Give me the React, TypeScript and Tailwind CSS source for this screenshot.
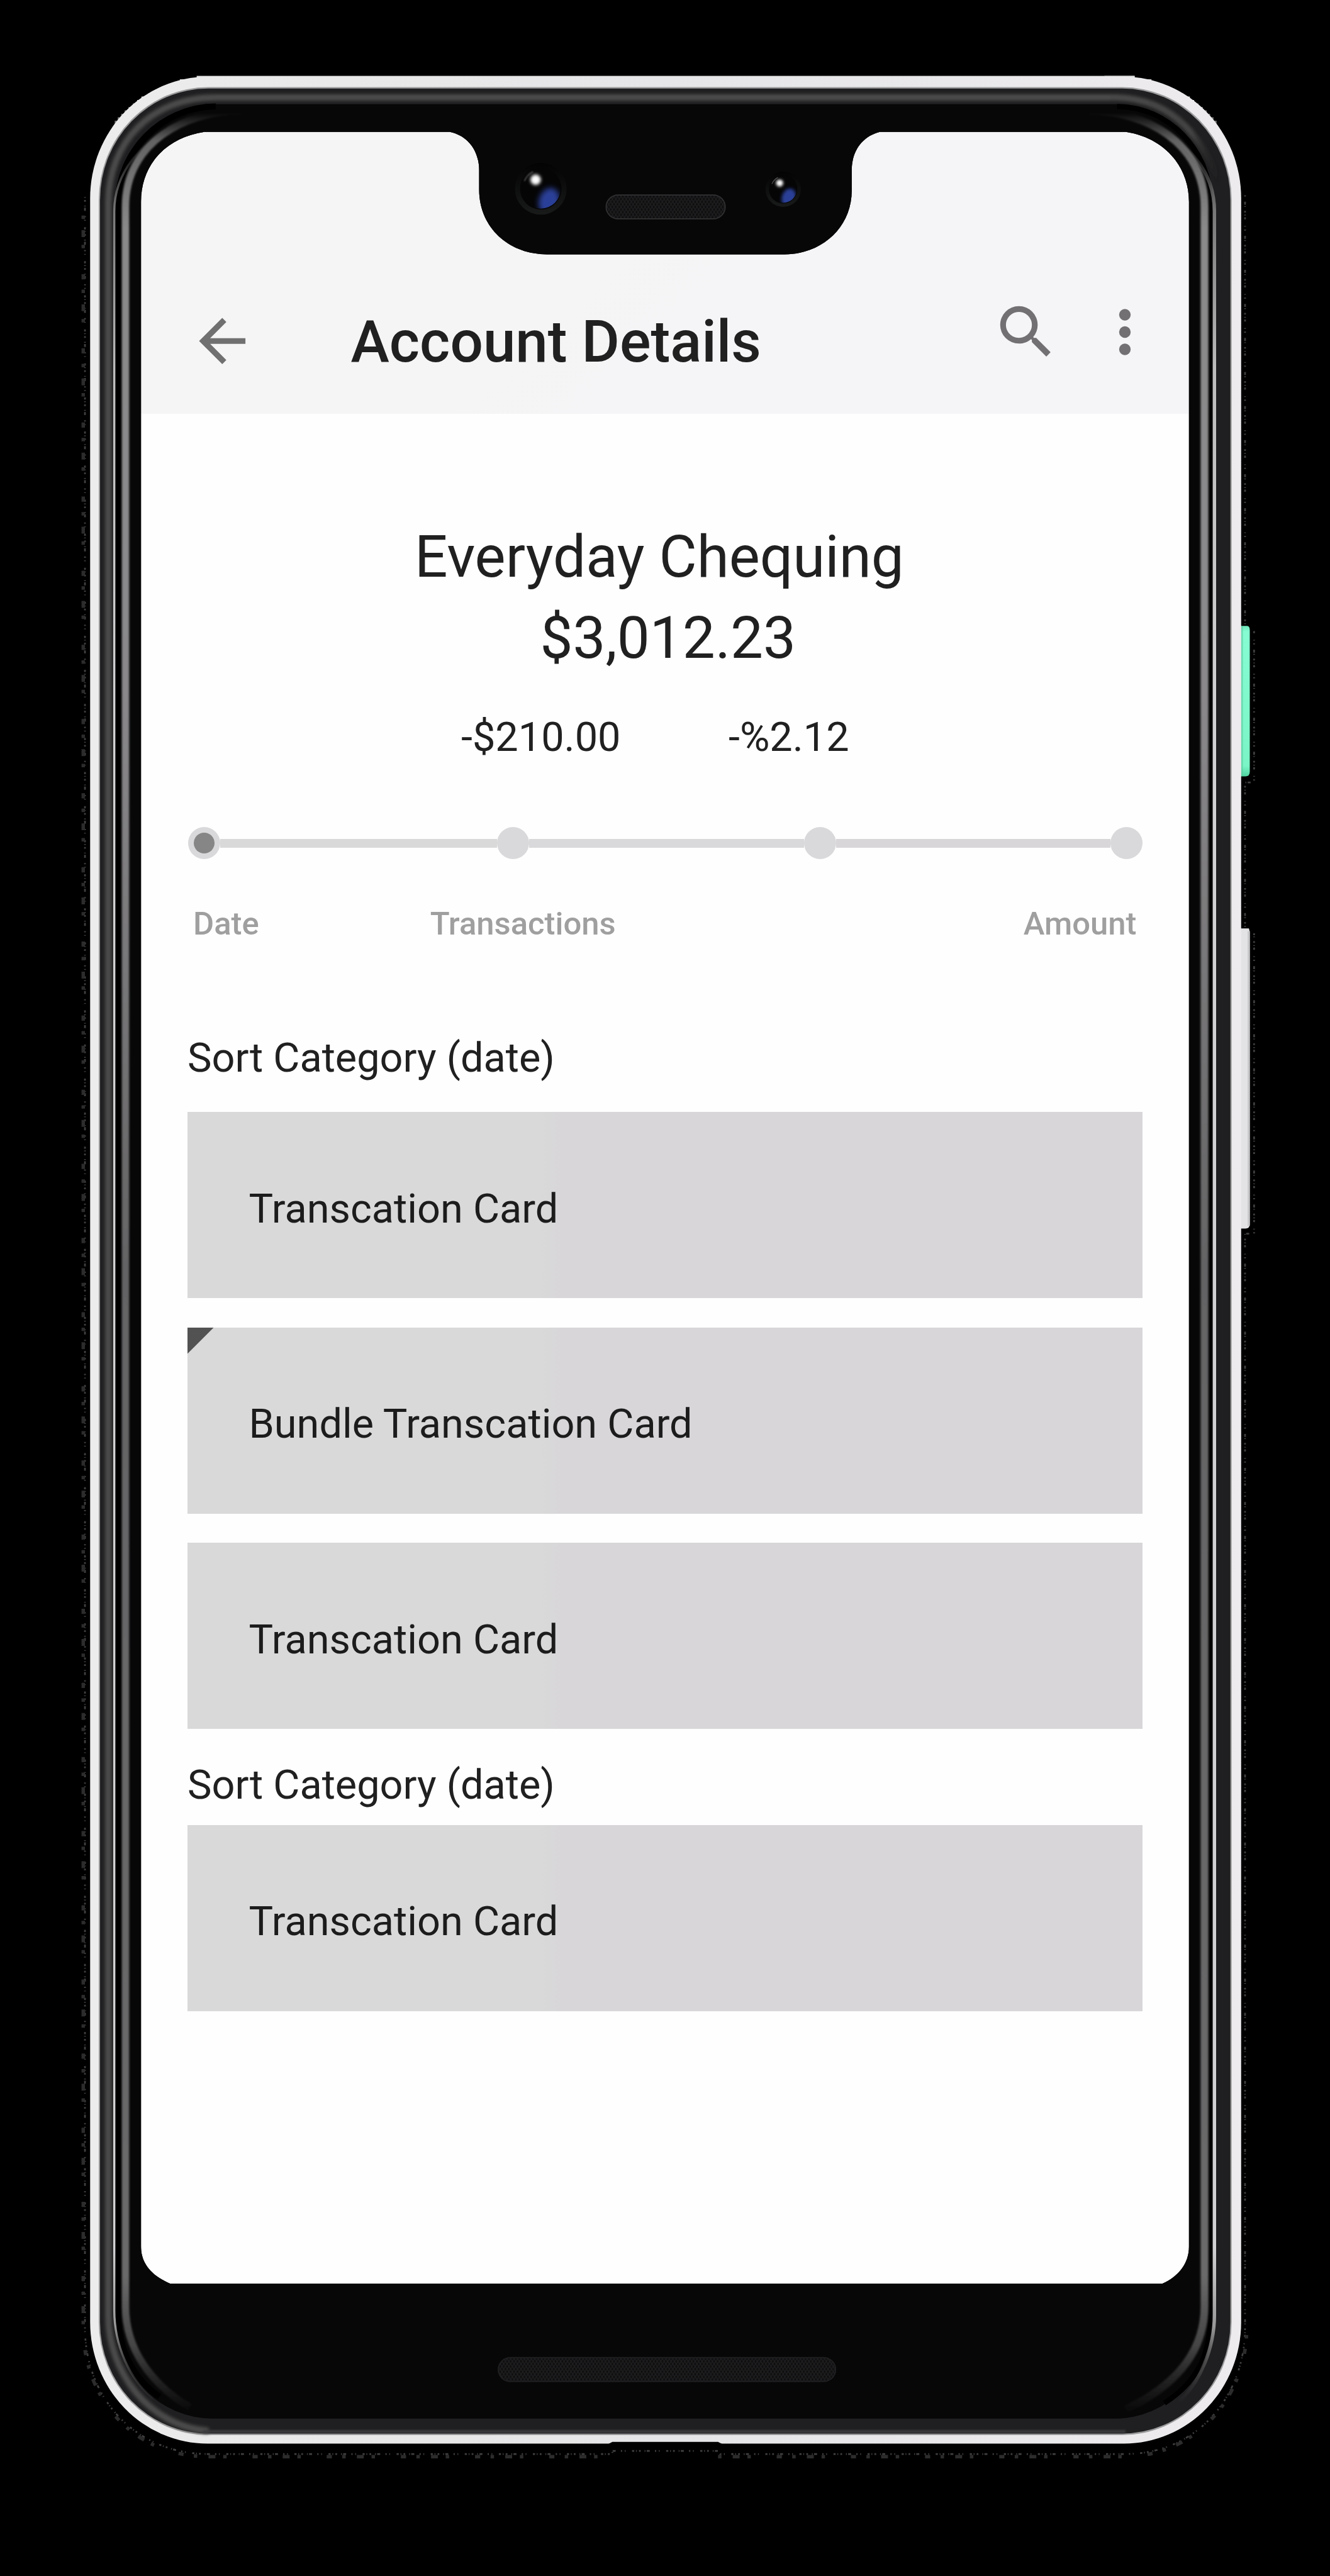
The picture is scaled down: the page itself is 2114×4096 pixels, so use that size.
import React from "react";

const SCREEN =
  "M327 468 C327 382 385 319 474 306 H1043 C1083 314 1111 348 1111 395 V440 C1111 528 1180 590 1268 590 H1819 C1905 590 1975 528 1975 442 V395 C1975 350 2000 316 2040 306 H2611 C2700 320 2757 386 2757 468 V5212 C2757 5250 2734 5281 2695 5298 H395 C350 5279 327 5250 327 5212 Z";

// Stepped fringe on the top corners, one entry for each 8px row.
const STEPS = [456, 417, 400, 376, 360, 344, 328, 318, 308, 298, 289, 281, 273, 266];

function Speaker({ x, y, w, h, edge }: { x: number; y: number; w: number; h: number; edge: string }) {
  return (
    <g>
      <rect x={x} y={y} width={w} height={h} rx={h / 2} fill="#0e0e0f" />
      <rect x={x} y={y} width={w} height={h} rx={h / 2} fill="url(#mesh)" />
      <rect x={x + 1.5} y={y + 1.5} width={w - 3} height={h - 3} rx={h / 2 - 1} fill="none" stroke={edge} strokeWidth="2.5" />
    </g>
  );
}

function Camera({ cx, cy, r }: { cx: number; cy: number; r: number }) {
  return (
    <g transform={`translate(${cx} ${cy}) scale(${r / 60})`}>
      <circle r="60" fill="url(#ring)" />
      <circle r="48" fill="#050506" />
      <g clipPath="url(#lens)">
        <ellipse cx="26" cy="24" rx="24" ry="32" fill="#2c3f98" filter="url(#soft7)" transform="rotate(14)" />
      </g>
      <path d="M-38 -18 A42 42 0 0 1 -18 -40" fill="none" stroke="#4a4a4a" strokeWidth="3" filter="url(#soft2)" />
      <circle cx="-12" cy="-21" r="12" fill="#fff" filter="url(#soft3)" />
    </g>
  );
}

function DeviceFrame() {
  return (
    <svg viewBox="0 0 3084 5976" className="pointer-events-none absolute inset-0 h-[4096px] w-[2114px]" preserveAspectRatio="none" aria-hidden="true">
      <defs>
        <clipPath id="outside">
          <path clipRule="evenodd" d={`M0 0 H3084 V5976 H0 Z ${SCREEN}`} />
        </clipPath>
        <clipPath id="lens"><circle r="46" /></clipPath>
        <filter id="soft2" x="-50%" y="-50%" width="200%" height="200%"><feGaussianBlur stdDeviation="1.5" /></filter>
        <filter id="soft3" x="-100%" y="-100%" width="300%" height="300%"><feGaussianBlur stdDeviation="4" /></filter>
        <filter id="soft7" x="-50%" y="-50%" width="200%" height="200%"><feGaussianBlur stdDeviation="6" /></filter>
        <filter id="blur" filterUnits="userSpaceOnUse" x="0" y="0" width="3084" height="5976"><feGaussianBlur stdDeviation="4" /></filter>
        <filter id="blur2" filterUnits="userSpaceOnUse" x="0" y="0" width="3084" height="5976"><feGaussianBlur stdDeviation="2.5" /></filter>
        <pattern id="mesh" width="8" height="12" patternUnits="userSpaceOnUse">
          <path d="M0 0 L4 6 L0 12 M8 0 L4 6 L8 12" fill="none" stroke="#1f1f21" strokeWidth="2" />
        </pattern>
        <linearGradient id="ring" x1="0" y1="0" x2="0" y2="1">
          <stop offset="0" stopColor="#030303" /><stop offset="1" stopColor="#191a1a" />
        </linearGradient>
        <linearGradient id="shell" gradientUnits="userSpaceOnUse" x1="209" y1="0" x2="2878" y2="0">
          <stop offset="0" stopColor="#ececec" /><stop offset="0.5" stopColor="#e6e5e7" /><stop offset="1" stopColor="#edebee" />
        </linearGradient>
        <linearGradient id="glow" gradientUnits="userSpaceOnUse" x1="0" y1="262" x2="0" y2="5600">
          <stop offset="0" stopColor="#8a8a8a" stopOpacity="0" /><stop offset="0.012" stopColor="#8a8a8a" stopOpacity="0.7" />
          <stop offset="0.05" stopColor="#8a8a8a" /><stop offset="0.25" stopColor="#8a888b" />
          <stop offset="0.5" stopColor="#646465" /><stop offset="0.94" stopColor="#6a6a6b" />
          <stop offset="0.97" stopColor="#555" stopOpacity="0.8" /><stop offset="1" stopColor="#444" stopOpacity="0" />
        </linearGradient>
        <linearGradient id="line" gradientUnits="userSpaceOnUse" x1="0" y1="330" x2="0" y2="5580">
          <stop offset="0" stopColor="#777" stopOpacity="0" /><stop offset="0.03" stopColor="#777" />
          <stop offset="0.1" stopColor="#bdbdbd" /><stop offset="0.25" stopColor="#d2d1d3" />
          <stop offset="0.93" stopColor="#d2d1d3" /><stop offset="0.965" stopColor="#999" /><stop offset="1" stopColor="#444" stopOpacity="0" />
        </linearGradient>
        <linearGradient id="band" gradientUnits="userSpaceOnUse" x1="2560" y1="0" x2="2830" y2="0">
          <stop offset="0" stopColor="#4b4b4b" /><stop offset="0.75" stopColor="#444" /><stop offset="1" stopColor="#222" stopOpacity="0" />
        </linearGradient>
        <linearGradient id="green" x1="0" y1="0" x2="0" y2="1">
          <stop offset="0" stopColor="#6fe8bb" /><stop offset="0.04" stopColor="#86fcd3" /><stop offset="0.93" stopColor="#7af5c6" /><stop offset="1" stopColor="#4fd39f" />
        </linearGradient>
      </defs>

      <path d="M197 457 V5400 C197 5560 310 5690 478 5693 H1420 V5686 H1670 V5693 H2610 C2775 5693 2887 5560 2887 5400 V2862 H2908 V2165 M2887 2150 V1815 H2908 V1460 M2887 1448 V450" fill="none" stroke="#404040" strokeWidth="4" strokeDasharray="2 5 4 9 2 3 7 12 3 6 2 15 5 4" />
      <path d="M193 500 V5400 C193 5560 305 5697 478 5699 H1420 M1665 5699 H2610 C2775 5697 2891 5560 2891 5400" fill="none" stroke="#2c2c2c" strokeWidth="8" strokeDasharray="8 26 16 18 8 60 12 24" />

      {STEPS.map((x, i) => (
        <g key={x} fill={i < 8 ? "#dedede" : "#777"}>
          <rect x={x} y={176 + i * 8} width={i < 1 ? 2175 : 70} height="9" />
          <rect x={3017 - x} y={176 + i * 8} width="70" height="9" />
        </g>
      ))}

      <g clipPath="url(#outside)">
        <path d="M2870 1452 H2892 Q2898 1452 2898 1462 V1790 Q2898 1801 2888 1801 H2870 Z" fill="url(#green)" />
        <rect x="2870" y="1453" width="12" height="347" fill="#5cc79d" opacity="0.6" />
        <path d="M2870 2154 H2896 L2898 2162 V2840 Q2898 2850 2888 2850 H2870 Z" fill="#e3e2e5" />
        <rect x="2893" y="2160" width="5" height="684" fill="#c9c8cb" />
        <rect x="209" y="178" width="2669" height="5491" rx="272" ry="282" fill="url(#shell)" />
        <rect x="229" y="202" width="2627" height="5447" rx="254" ry="262" fill="#9b9b9c" />
        <rect x="232" y="205.500" width="2621" height="5440" rx="251" ry="258" fill="#1f1e20" />
        <path d="M484 5639 C345 5630 250 5500 251 5370 V470 C252 330 350 226 500 226 H2590 C2730 230 2790 330 2833 430" fill="none" stroke="url(#band)" strokeWidth="15" filter="url(#blur)" />
        <path d="M470 5641 H2610" stroke="#3b3b3c" strokeWidth="7" filter="url(#blur2)" />
        <rect x="266" y="242" width="2546" height="5369" rx="228" ry="236" fill="#070708" />
        <path d="M500 247 C380 247 274 350 274 470 V5370 C274 5450 310 5520 370 5560" fill="none" stroke="#000" strokeWidth="14" />
        <path d="M2590 247 C2710 247 2807 350 2807 470 V5370 C2807 5470 2770 5530 2700 5575" fill="none" stroke="#000" strokeWidth="12" />
        <path d="M430 280 C330 320 265 400 265 490 V5360 C265 5440 300 5520 355 5565" fill="none" stroke="url(#line)" strokeWidth="5" />
        <path d="M2650 280 C2760 330 2816 400 2816 490 V5370 C2816 5450 2780 5530 2735 5570" fill="none" stroke="url(#line)" strokeWidth="8" />
        <path d="M560 257 C430 257 291 330 291 480 V5350 C291 5450 350 5530 440 5585" fill="none" stroke="url(#glow)" strokeWidth="17" filter="url(#blur2)" />
        <path d="M2525 257 C2655 257 2793 330 2793 480 V5350 C2793 5450 2735 5530 2610 5590" fill="none" stroke="url(#glow)" strokeWidth="18" filter="url(#blur2)" />
        <path d="M1408 5671 L1420 5665 H1665 L1677 5671 Z" fill="#000" />
        <Camera cx={1254} cy={438} r={60} />
        <Camera cx={1816} cy={439} r={41} />
        <Speaker x={1404} y={451} w={279} h={58} edge="#303032" />
        <Speaker x={1154} y={5468} w={785} h={58} edge="#1f1f21" />
      </g>
    </svg>
  );
}

function BackIcon() {
  return (
    <svg viewBox="0 0 24 24" className="mt-[279px] h-[110.500px] w-[110.500px]" fill="#707070">
      <path d="M20 11H7.830l5.590-5.590L12 4l-8 8 8 8 1.410-1.410L7.830 13H20z" />
    </svg>
  );
}

function SearchIcon() {
  return (
    <svg viewBox="0 0 24 24" className="size-[110px]" fill="#727073">
      <path d="M15.500 14h-.79l-.28-.27A6.471 6.471 0 0 0 16 9.500 6.500 6.500 0 1 0 9.500 16c1.610 0 3.090-.59 4.230-1.570l.27.28v.79l5 4.990L20.490 19zm-6 0C7.010 14 5 11.990 5 9.500S7.010 5 9.500 5 14 7.010 14 9.500 11.990 14 9.500 14" />
    </svg>
  );
}

function MoreIcon() {
  return (
    <svg viewBox="0 0 24 24" className="size-[110px]" fill="#727073">
      <circle cx="12" cy="6" r="2" />
      <circle cx="12" cy="12" r="2" />
      <circle cx="12" cy="18" r="2" />
    </svg>
  );
}

function AppBar() {
  return (
    <header className="flex h-[450px] items-start bg-[linear-gradient(135deg,#f5f5f5_45%,#f5f4f7_60%)] pl-[76px]">
      <BackIcon />
      <h1 className="mt-[285.500px] ml-[149px] text-[92.500px] leading-[100px] font-medium whitespace-nowrap">Account Details</h1>
      <div className="mt-[265px] mr-[49px] ml-auto flex gap-[47px]">
        <SearchIcon />
        <MoreIcon />
      </div>
    </header>
  );
}

function Step({ active = false }: { active?: boolean }) {
  return (
    <span className="flex size-[51px] shrink-0 items-center justify-center rounded-full bg-[#d9d8da]">
      {active && <span className="size-[33px] rounded-full bg-[#868686]" />}
    </span>
  );
}

function Stepper() {
  return (
    <div className="mt-[103px] ml-[1px] flex w-[1517px] items-center">
      <Step active />
      <span className="h-[14px] w-[440px] bg-[#d9d9d9]" />
      <Step />
      <span className="h-[14px] flex-1 bg-[#d9d8da]" />
      <Step />
      <span className="h-[14px] flex-1 bg-[#d8d6d9]" />
      <Step />
    </div>
  );
}

function Card({ title, bundle = false }: { title: string; bundle?: boolean }) {
  return (
    <article className="relative flex h-[296px] items-center bg-[linear-gradient(90deg,#d9d9d9_37%,#d8d6d9_39%)] pl-[97.500px] text-[64.800px] leading-[80px] text-[#1c1c1d]">
      {bundle && <span className="absolute top-0 left-0 size-[42px] bg-[#525252] [clip-path:polygon(0_0,100%_0,0_100%)]" />}
      <span className="mt-[11px]">{title}</span>
    </article>
  );
}

export default function App() {
  return (
    <div className="relative h-[4096px] w-[2114px] overflow-hidden bg-black pt-[208px] pl-[222px] font-['Roboto',sans-serif] text-[#202021]">
      <main className="h-[3426px] w-[1670px] bg-[#fefefe]">
        <AppBar />
        <section className="pl-[76px]">
          <h2 className="mt-[163px] pl-[361px] text-[92.500px] leading-[129px]">Everyday Chequing</h2>
          <p className="pl-[560.500px] text-[92.500px] leading-[129px]">$3,012.23</p>
          <div className="mt-[53px] flex gap-[171.500px] pl-[435px] text-[64.800px] leading-[80px]">
            <span>-$210.00</span>
            <span>-%2.12</span>
          </div>
          <Stepper />
          <div className="mt-[73px] flex pl-[9px] text-[50.800px] leading-[60px] font-medium text-[#a09fa0]">
            <span>Date</span>
            <span className="ml-[272px]">Transactions</span>
            <span className="ml-[648px]">Amount</span>
          </div>
          <div className="mt-[143px] flex w-[1517.500px] flex-col">
            <h3 className="text-[64.800px] leading-[80px]">Sort Category (date)</h3>
            <div className="mt-[46px] flex flex-col gap-[46.500px]">
              <Card title="Transcation Card" />
              <Card title="Bundle Transcation Card" bundle />
              <Card title="Transcation Card" />
            </div>
            <h3 className="mt-[49px] text-[64.800px] leading-[80px]">Sort Category (date)</h3>
            <div className="mt-[23.500px]">
              <Card title="Transcation Card" />
            </div>
          </div>
        </section>
      </main>
      <DeviceFrame />
    </div>
  );
}
